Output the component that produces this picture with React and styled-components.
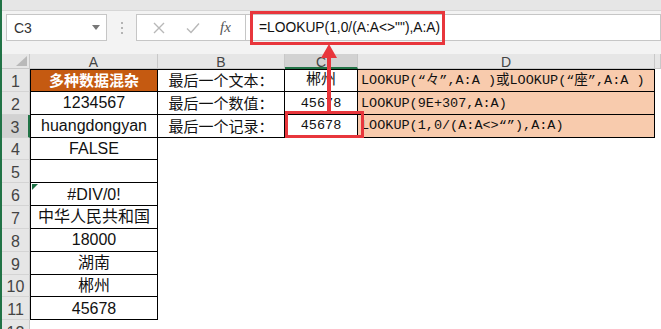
import React from "react";
import styled, { createGlobalStyle } from "styled-components";

const GlobalStyle = createGlobalStyle`
  html, body {
    margin: 0;
    padding: 0;
    background: #ffffff;
    overflow: hidden;
  }
`;

const RED = "#e8363c";
const GREEN = "#217346";

const Window = styled.div`
  position: relative;
  width: 661px;
  height: 329px;
  border-left: 2px solid ${GREEN};
  box-sizing: border-box;
  background: #ffffff;
  overflow: hidden;
  font-family: "Liberation Sans", Arial, "Noto Sans CJK SC", sans-serif;
`;

const TopStrip = styled.div`
  height: 10px;
  background: #e6e6e6;
  border-bottom: 1px solid #d6d6d6;
`;

const FormulaRow = styled.div`
  display: flex;
  align-items: center;
  height: 33px;
  background: #f3f3f3;
  padding-left: 4px;
`;

const NameBox = styled.div`
  display: flex;
  align-items: center;
  justify-content: space-between;
  width: 101px;
  height: 27px;
  box-sizing: border-box;
  padding: 0 6px 0 7px;
  background: #ffffff;
  border: 1px solid #c6c6c6;
  font-size: 14px;
  color: #333333;
`;

const Caret = styled.span`
  width: 0;
  height: 0;
  border-left: 4px solid transparent;
  border-right: 4px solid transparent;
  border-top: 5px solid #777777;
`;

const Dots = styled.div`
  display: flex;
  flex-direction: column;
  gap: 3px;
  margin: 0 13px 0 14px;
  span {
    width: 2px;
    height: 2px;
    background: #b4b4b4;
  }
`;

const ButtonGroup = styled.div`
  display: flex;
  align-items: center;
  justify-content: space-around;
  width: 109px;
  height: 27px;
  box-sizing: border-box;
  background: #ffffff;
  border: 1px solid #c6c6c6;
  border-right: none;
  padding: 0 4px 0 6px;
`;

const Fx = styled.span`
  font-family: "Liberation Serif", serif;
  font-style: italic;
  font-size: 15px;
  color: #555555;
`;

const FormulaInput = styled.div`
  flex: 1;
  display: flex;
  align-items: center;
  height: 27px;
  box-sizing: border-box;
  background: #ffffff;
  border: 1px solid #c6c6c6;
  padding-left: 13px;
  font-size: 13.8px;
  color: #111111;
  white-space: pre;
`;

const Spacer = styled.div`
  height: 10px;
  background: #f3f3f3;
`;

const Sheet = styled.div`
  display: grid;
  grid-template-columns: 28px 128px 127px 73px 297px 1fr;
  grid-template-rows: 15px;
  grid-auto-rows: 22.85px;
`;

const ColHead = styled.div`
  display: flex;
  align-items: center;
  justify-content: center;
  box-sizing: border-box;
  background: ${(p) => (p.$active ? "#d2d2d2" : "#e6e6e6")};
  border-right: 1px solid #c8c8c8;
  border-bottom: ${(p) => (p.$active ? `2px solid ${GREEN}` : "1px solid #c8c8c8")};
  font-size: 14px;
  color: #444444;
  line-height: 1;
  padding-top: 2px;
`;

const Corner = styled(ColHead)`
  position: relative;
  &::after {
    content: "";
    position: absolute;
    right: 2px;
    bottom: 2px;
    border-left: 11px solid transparent;
    border-bottom: 10px solid #b9b9b9;
  }
`;

const RowHead = styled.div`
  display: flex;
  align-items: flex-end;
  justify-content: center;
  box-sizing: border-box;
  background: ${(p) => (p.$active ? "#d2d2d2" : "#e6e6e6")};
  border-right: ${(p) => (p.$active ? `2px solid ${GREEN}` : "1px solid #c8c8c8")};
  border-bottom: 1px solid #d4d4d4;
  font-size: 16px;
  color: #444444;
  padding-bottom: 1px;
  line-height: 1;
`;

const Cell = styled.div`
  position: relative;
  display: flex;
  align-items: center;
  justify-content: ${(p) => p.$align || "center"};
  box-sizing: border-box;
  padding: 1px 3px 0;
  white-space: pre;
  overflow: visible;
  background: ${(p) => p.$bg || "transparent"};
  color: ${(p) => p.$color || "#111111"};
  font-weight: ${(p) => (p.$bold ? 700 : 400)};
  font-size: ${(p) => p.$size || 16}px;
  font-family: ${(p) =>
    p.$mono
      ? `"Liberation Mono", "Noto Sans CJK SC", monospace`
      : `"Liberation Sans", Arial, "Noto Sans CJK SC", sans-serif`};
  border-left: ${(p) => (p.$left ? "1px solid #000" : "none")};
  border-right: ${(p) => (p.$boxed ? "1px solid #000" : "none")};
  border-bottom: ${(p) => (p.$boxed ? "1px solid #000" : "none")};
  border-top: ${(p) => (p.$top ? "1px solid #000" : "none")};
  line-height: 1;
`;

const ErrorMark = styled.span`
  position: absolute;
  left: 1px;
  top: 1px;
  border-right: 6px solid transparent;
  border-top: 6px solid #1e7145;
`;

const CellFrame = styled.div`
  position: absolute;
  left: 283px;
  top: 111px;
  width: 79px;
  height: 27px;
  box-sizing: border-box;
  border: 3px solid ${RED};
  pointer-events: none;
`;

const FormulaFrame = styled.div`
  position: absolute;
  left: 248px;
  top: 11px;
  width: 195px;
  height: 34px;
  box-sizing: border-box;
  border: 3px solid ${RED};
  pointer-events: none;
`;

const Arrow = styled.svg`
  position: absolute;
  left: 317px;
  top: 44px;
`;

const cols = ["A", "B", "C", "D", ""];

const colA = [
  "多种数据混杂",
  "1234567",
  "huangdongyan",
  "FALSE",
  "",
  "#DIV/0!",
  "中华人民共和国",
  "18000",
  "湖南",
  "郴州",
  "45678",
];

const side = [
  ["最后一个文本：", "郴州", "LOOKUP(“々”,A:A )或LOOKUP(“座”,A:A )"],
  ["最后一个数值：", "45678", "LOOKUP(9E+307,A:A)"],
  ["最后一个记录：", "45678", "LOOKUP(1,0/(A:A<>“”),A:A)"],
];

export default function App() {
  return (
    <>
      <GlobalStyle />
      <Window>
        <TopStrip />
        <FormulaRow>
          <NameBox>
            C3
            <Caret />
          </NameBox>
          <Dots>
            <span />
            <span />
            <span />
          </Dots>
          <ButtonGroup>
            <svg width="12" height="12" viewBox="0 0 12 12">
              <path d="M1 1 L11 11 M11 1 L1 11" stroke="#b8b8b8" strokeWidth="1.4" fill="none" />
            </svg>
            <svg width="14" height="12" viewBox="0 0 14 12">
              <path d="M1 6.5 L5 10.5 L13 1.5" stroke="#b8b8b8" strokeWidth="1.4" fill="none" />
            </svg>
            <Fx>fx</Fx>
          </ButtonGroup>
          <FormulaInput>{'=LOOKUP(1,0/(A:A<>""),A:A)'}</FormulaInput>
        </FormulaRow>
        <Spacer />
        <Sheet>
          <Corner />
          {cols.map((c, i) => (
            <ColHead key={i} $active={c === "C"}>
              {c}
            </ColHead>
          ))}
          {colA.map((a, i) => {
            const r = side[i];
            const first = i === 0;
            return (
              <React.Fragment key={i}>
                <RowHead $active={i === 2}>{i + 1}</RowHead>
                <Cell
                  $boxed
                  $left
                  $top={first}
                  $bg={first ? "#c55a11" : undefined}
                  $color={first ? "#ffffff" : undefined}
                  $bold={first}
                  $size={first ? 15 : 16}
                >
                  {i === 5 && <ErrorMark />}
                  {a}
                </Cell>
                {r ? (
                  <>
                    <Cell $boxed $top={first} $size={15}>
                      {r[0]}
                    </Cell>
                    <Cell $boxed $top={first} $mono $size={first ? 15 : 13.5}>
                      {r[1]}
                    </Cell>
                    <Cell $boxed $top={first} $mono $size={13.5} $align="flex-start" $bg="#f8cbad">
                      {r[2]}
                    </Cell>
                  </>
                ) : (
                  <>
                    <Cell />
                    <Cell />
                    <Cell />
                  </>
                )}
                <Cell />
              </React.Fragment>
            );
          })}
          <RowHead>12</RowHead>
        </Sheet>
        <FormulaFrame />
        <CellFrame />
        <Arrow width="20" height="70" viewBox="0 0 20 70">
          <path d="M10 0 L18 14 L12 14 L12 68 L8 68 L8 14 L2 14 Z" fill={RED} />
        </Arrow>
      </Window>
    </>
  );
}
